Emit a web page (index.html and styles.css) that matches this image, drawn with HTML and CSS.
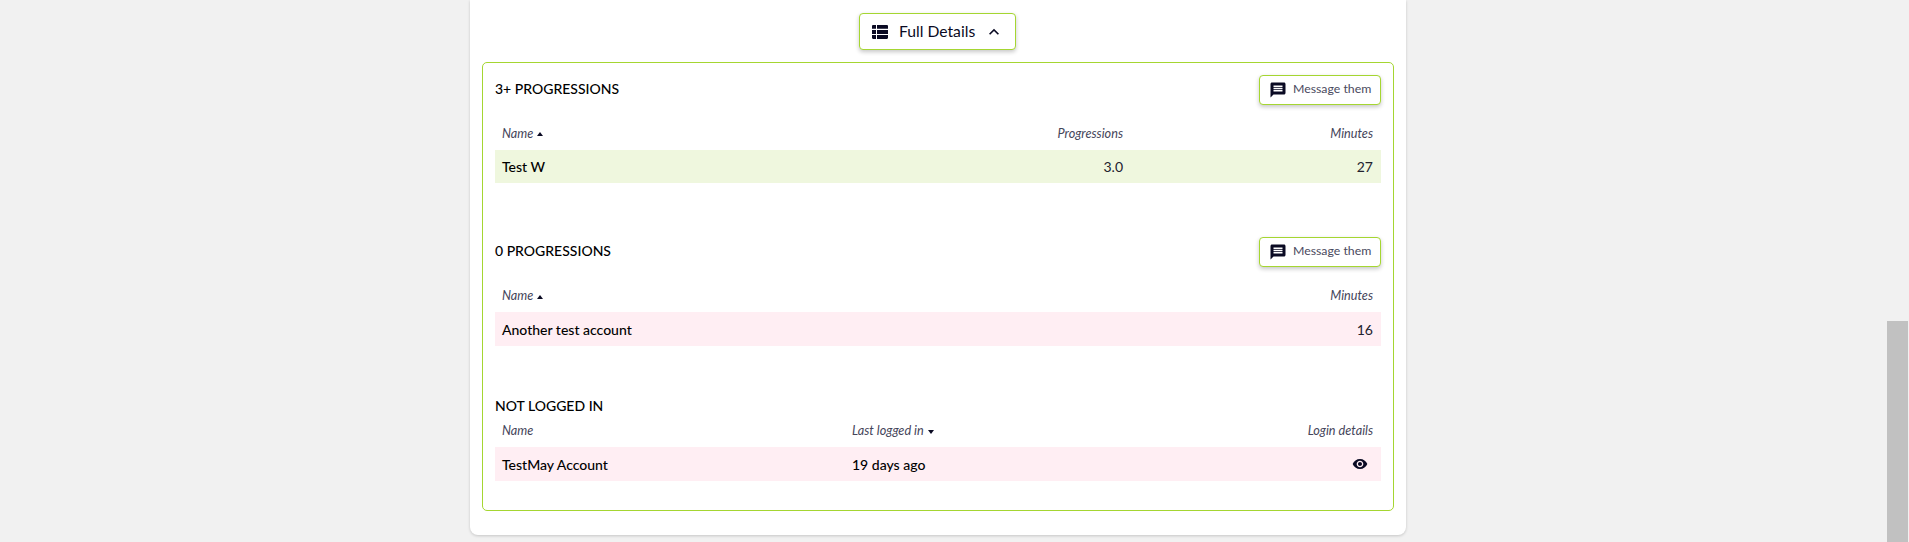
FILE: index.html
```html
<!DOCTYPE html>
<html lang="en">
<head>
<meta charset="utf-8">
<title>Full Details</title>
<link rel="stylesheet" href="styles.css">
</head>
<body>
<div class="app">
  <main class="page">
    <section class="card">
      <div class="toggle-wrap">
        <button class="btn btn-toggle" type="button">
          <svg class="ic-list" viewBox="0 0 16 14" aria-hidden="true"><path d="M0 1.2C0 .5.5 0 1.2 0H4v3.8H0zM5 0h9.8c.7 0 1.2.5 1.2 1.2v2.6H5zM0 5h4v3.9H0zM5 5h11v3.9H5zM0 10.100h4V14H1.200C.5 14 0 13.500 0 12.800zM5 10.100h11v2.700c0 .7-.5 1.200-1.200 1.200H5z"/></svg>
          <span class="btn-label">Full Details</span>
          <svg class="ic-chev" viewBox="0 0 24 24" aria-hidden="true"><path d="M12 8l-6 6 1.410 1.410L12 10.830l4.590 4.580L18 14z"/></svg>
        </button>
      </div>
      <div class="panel">
        <div class="group">
          <div class="group-head">
            <h3>3+ PROGRESSIONS</h3>
            <button class="btn btn-msg" type="button">
              <svg class="ic-msg" viewBox="0 0 24 24" aria-hidden="true"><path d="M20 2H4c-1.100 0-1.990.9-1.990 2L2 22l4-4h14c1.100 0 2-.9 2-2V4c0-1.100-.9-2-2-2zm-2 12H6v-2h12v2zm0-3H6V9h12v2zm0-3H6V6h12v2z"/></svg>
              <span class="btn-label">Message them</span>
            </button>
          </div>
          <div class="grid cols-prog thead">
            <span>Name <i class="caret up"></i></span>
            <span class="end">Progressions</span>
            <span class="end">Minutes</span>
          </div>
          <div class="grid cols-prog row good">
            <strong>Test W</strong>
            <span class="end">3.0</span>
            <span class="end">27</span>
          </div>
        </div>

        <div class="group">
          <div class="group-head">
            <h3>0 PROGRESSIONS</h3>
            <button class="btn btn-msg" type="button">
              <svg class="ic-msg" viewBox="0 0 24 24" aria-hidden="true"><path d="M20 2H4c-1.100 0-1.990.9-1.990 2L2 22l4-4h14c1.100 0 2-.9 2-2V4c0-1.100-.9-2-2-2zm-2 12H6v-2h12v2zm0-3H6V9h12v2zm0-3H6V6h12v2z"/></svg>
              <span class="btn-label">Message them</span>
            </button>
          </div>
          <div class="grid cols-two thead">
            <span>Name <i class="caret up"></i></span>
            <span class="end">Minutes</span>
          </div>
          <div class="grid cols-two row bad">
            <strong>Another test account</strong>
            <span class="end">16</span>
          </div>
        </div>

        <div class="group group-last">
          <h3 class="plain-title">NOT LOGGED IN</h3>
          <div class="grid cols-login thead thead-tight">
            <span>Name</span>
            <span>Last logged in <i class="caret down"></i></span>
            <span class="end">Login details</span>
          </div>
          <div class="grid cols-login row bad">
            <strong>TestMay Account</strong>
            <strong>19 days ago</strong>
            <span class="end">
              <svg class="ic-eye" viewBox="0 0 24 24" aria-hidden="true"><path d="M12 4.500C7 4.500 2.730 7.610 1 12c1.730 4.390 6 7.500 11 7.500s9.270-3.110 11-7.500c-1.730-4.390-6-7.500-11-7.500zM12 17c-2.760 0-5-2.240-5-5s2.240-5 5-5 5 2.240 5 5-2.240 5-5 5zm0-8c-1.660 0-3 1.340-3 3s1.340 3 3 3 3-1.340 3-3-1.340-3-3-3z"/></svg>
            </span>
          </div>
        </div>
      </div>
    </section>
  </main>
  <aside class="scrollbar"><div class="thumb"></div></aside>
</div>
</body>
</html>
```

FILE: styles.css
```css
* { box-sizing: border-box; }
html, body { margin: 0; height: 542px; overflow: hidden; }
body {
  background: #f1f1f1;
  color: #0a0a23;
  font-family: "Lato", "Noto Sans", sans-serif;
  font-size: 14px;
}
.app { display: flex; height: 542px; }
.page { flex: 1; padding-left: 470px; }
.card {
  width: 936px;
  height: 535px;
  background: #fff;
  border-radius: 0 0 8px 8px;
  box-shadow: 0 1px 3px rgba(0, 0, 0, .18);
  padding: 13px 12px 0;
}
.toggle-wrap { display: flex; justify-content: center; height: 37px; margin-bottom: 12px; padding-right: 1px; }
.btn {
  display: inline-flex;
  align-items: center;
  background: #fff;
  border: 1.5px solid #a5d631;
  border-radius: 4px;
  box-shadow: 0 2px 4px rgba(0, 0, 0, .22);
  font-family: inherit;
  color: #0a0a23;
  padding: 0;
}
.btn-label { padding-bottom: 2px; }
.btn-toggle { width: 157px; height: 37px; font-size: 15.7px; padding-left: 12px; }
.ic-list { width: 16px; height: 14px; fill: #0a0a23; margin-right: 11px; }
.ic-chev { width: 20px; height: 20px; fill: #0a0a23; margin-left: 9px; }
.btn-msg { width: 122px; height: 30px; font-size: 12.3px; padding-left: 9px; color: #4a4a5e; }
.ic-msg { width: 18px; height: 18px; fill: #0a0a23; margin-right: 6px; }
.ic-eye { width: 16px; height: 16px; fill: #0a0a23; display: block; margin: 0 5px 0 auto; }
.panel {
  width: 912px;
  height: 449px;
  border: 1.5px solid #a5d631;
  border-radius: 5px;
  padding: 11.500px 12px 0;
}
.group { margin-bottom: 53.400px; }
.group-last { margin: 0; }
.group-head { display: flex; justify-content: space-between; align-items: center; height: 30px; }
h3 { margin: 0; font-size: 14px; font-weight: 500; color: #000; padding-bottom: 2px; }
.plain-title { line-height: 13px; padding: 0; }
.grid { display: grid; align-items: center; padding: 0 8px 0 7px; }
.cols-prog { grid-template-columns: 1fr 250px 250px; }
.cols-two { grid-template-columns: 1fr 250px; }
.cols-login { grid-template-columns: 350px 1fr 200px; }
.thead { height: 45.400px; padding-top: 11px; font-size: 12.700px; font-style: italic; color: #45455a; }
.thead-tight { height: 35.200px; padding-top: 0; }
.row { height: 33.600px; font-size: 14px; color: #22222e; }
.row strong { font-weight: 500; color: #000; }
.good { background: #eff7de; }
.bad { background: #ffeef3; }
.end { text-align: right; }
.caret {
  display: inline-block;
  width: 0;
  height: 0;
  margin-left: 1px;
  border-left: 3.500px solid transparent;
  border-right: 3.500px solid transparent;
  vertical-align: middle;
}
.caret.up { border-bottom: 4px solid #0a0a23; }
.caret.down { border-top: 4px solid #0a0a23; }
.scrollbar { width: 22px; background: #f1f1f1; padding: 321px 1px 0 0; }
.thumb { height: 221px; background: #c1c1c1; }
```
